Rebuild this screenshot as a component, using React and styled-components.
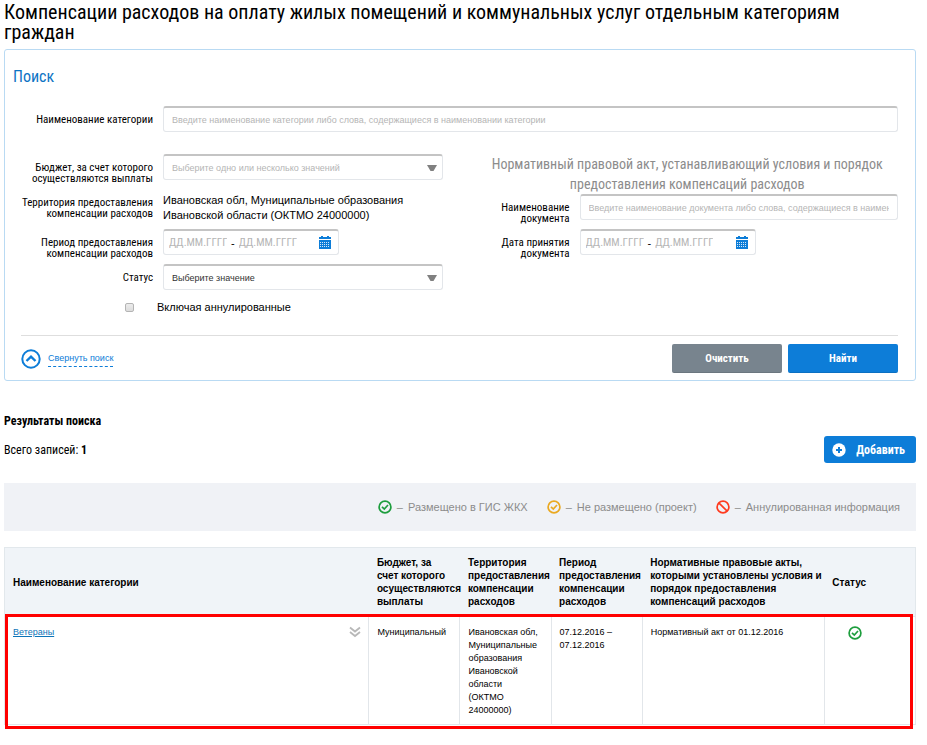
import { useState } from "react";
import styled, { createGlobalStyle } from "styled-components";

const GlobalStyle = createGlobalStyle`
  * {
    box-sizing: border-box;
  }
  body {
    margin: 0;
    background: #fff;
    color: #000;
    font-family: "Liberation Sans", Arial, sans-serif;
    font-size: 11px;
  }
  button, input, select {
    font-family: inherit;
  }
`;

const condensed = `"Roboto Condensed", "Liberation Sans Narrow", "Roboto", sans-serif`;

const App = () => {
  const [canceled, setCanceled] = useState(false);

  return (
    <Page>
      <GlobalStyle />
      <Title>
        Компенсации расходов на оплату жилых помещений и коммунальных услуг отдельным категориям граждан
      </Title>

      <SearchPanel>
        <PanelTitle>Поиск</PanelTitle>
        <Field>
          <Label htmlFor="category">Наименование категории</Label>
          <TextInput
            id="category"
            type="text"
            placeholder="Введите наименование категории либо слова, содержащиеся в наименовании категории"
          />
        </Field>

        <Columns>
          <Column>
            <Field>
              <Label htmlFor="budget">Бюджет, за счет которого осуществляются выплаты</Label>
              <Select id="budget" text="Выберите одно или несколько значений" $muted />
            </Field>
            <Field>
              <Label as="span">Территория предоставления компенсации расходов</Label>
              <Value>Ивановская обл, Муниципальные образования Ивановской области (ОКТМО 24000000)</Value>
            </Field>
            <Field>
              <Label htmlFor="period">Период предоставления компенсации расходов</Label>
              <DateRange id="period" />
            </Field>
            <Field>
              <Label htmlFor="status">Статус</Label>
              <Select id="status" text="Выберите значение" />
            </Field>
            <CheckRow>
              <CheckBox
                id="canceled"
                type="checkbox"
                checked={canceled}
                onChange={(e) => setCanceled(e.target.checked)}
              />
              <label htmlFor="canceled">Включая аннулированные</label>
            </CheckRow>
          </Column>

          <div>
            <ActTitle>Нормативный правовой акт, устанавливающий условия и порядок предоставления компенсаций расходов</ActTitle>
            <Column>
              <Field $narrow>
                <Label htmlFor="document">Наименование документа</Label>
                <TextInput
                  id="document"
                  type="text"
                  placeholder="Введите наименование документа либо слова, содержащиеся в наименовании документа"
                />
              </Field>
              <Field $narrow>
                <Label htmlFor="accepted">Дата принятия документа</Label>
                <DateRange id="accepted" />
              </Field>
            </Column>
          </div>
        </Columns>

        <PanelFooter>
          <Collapse href="#">
            <CollapseIcon />
            <span>Свернуть поиск</span>
          </Collapse>
          <Buttons>
            <Button type="button" $gray>Очистить</Button>
            <Button type="button">Найти</Button>
          </Buttons>
        </PanelFooter>
      </SearchPanel>

      <ResultsTitle>Результаты поиска</ResultsTitle>
      <ResultsBar>
        <span>Всего записей: <b>1</b></span>
        <AddButton type="button">
          <PlusIcon />
          Добавить
        </AddButton>
      </ResultsBar>

      <Legend>
        <LegendItem><CheckIcon color="#1e9e3e" /><span>–</span>Размещено в ГИС ЖКХ</LegendItem>
        <LegendItem><CheckIcon color="#eaa921" /><span>–</span>Не размещено (проект)</LegendItem>
        <LegendItem><BanIcon /><span>–</span>Аннулированная информация</LegendItem>
      </Legend>

      <Table>
        <colgroup>
          <Col $width="40%" />
          <Col $width="10%" />
          <Col $width="10%" />
          <Col $width="10%" />
          <Col $width="20%" />
          <Col $width="10%" />
        </colgroup>
        <thead>
          <tr>
            <th>Наименование категории</th>
            <th>Бюджет, за счет&nbsp;которого осуществляются выплаты</th>
            <th>Территория предоставления компенсации расходов</th>
            <th>Период предоставления компенсации расходов</th>
            <th>Нормативные правовые акты, которыми установлены условия и порядок предоставления компенсаций расходов</th>
            <th>Статус</th>
          </tr>
        </thead>
        <tbody>
          <MarkedRow>
            <td>
              <NameCell>
                <a href="#">Ветераны</a>
                <ExpandIcon />
              </NameCell>
            </td>
            <td>Муниципальный</td>
            <td>
              Ивановская обл, Муниципальные образования Ивановской области
              <br />
              (ОКТМО
              <br />
              24000000)
            </td>
            <td>07.12.2016 – 07.12.2016</td>
            <td>Нормативный акт от 01.12.2016</td>
            <StatusCell><CheckIcon color="#1e9e3e" /></StatusCell>
          </MarkedRow>
        </tbody>
      </Table>
    </Page>
  );
};

export default App;

const Select = ({ id, text, $muted }) => (
  <SelectBox>
    <SelectInput id={id} $muted={$muted}>
      <option>{text}</option>
    </SelectInput>
    <svg width="10" height="6" viewBox="0 0 10 6" aria-hidden="true">
      <path d="M0 0h10L6.500 6h-3z" fill="#808080" />
    </svg>
  </SelectBox>
);

const DateRange = ({ id }) => (
  <DateBox>
    <DateInput id={id} type="text" placeholder="ДД.ММ.ГГГГ" />
    <span>-</span>
    <DateInput type="text" placeholder="ДД.ММ.ГГГГ" aria-label="Дата окончания" />
    <CalendarButton type="button" aria-label="Календарь">
      <svg width="12" height="13" viewBox="0 0 12 13" fill="#0d7dd8">
        <path d="M0 1h2V0h2v1h4V0h2v1h2v2H0z" />
        <path d="M0 4h12v9H0z" />
        <path
          d="M1 6h1v1H1zM3 6h1v1H3zM5 6h1v1H5zM7 6h1v1H7zM9 6h1v1H9zM1 8h1v1H1zM3 8h1v1H3zM5 8h1v1H5zM7 8h1v1H7zM9 8h1v1H9zM1 10h1v1H1zM3 10h1v1H3zM5 10h1v1H5zM7 10h1v1H7zM9 10h1v1H9z"
          fill="#d5e8f8"
        />
      </svg>
    </CalendarButton>
  </DateBox>
);

const CollapseIcon = () => (
  <svg width="20" height="20" viewBox="0 0 20 20" fill="none" stroke="#0d7dd8">
    <circle cx="10" cy="10" r="8.700" strokeWidth="2" />
    <path d="M5.500 12L10 7.700l4.500 4.300" strokeWidth="2.400" />
  </svg>
);

const PlusIcon = () => (
  <svg width="14" height="14" viewBox="0 0 14 14">
    <circle cx="7" cy="7" r="6.700" fill="#fff" />
    <path d="M7 4v6M4 7h6" stroke="#0d7dd8" strokeWidth="2" />
  </svg>
);

const CheckIcon = ({ color }) => (
  <svg width="14" height="14" viewBox="0 0 14 14" fill="none" stroke={color} strokeWidth="1.700">
    <circle cx="7" cy="7" r="5.900" />
    <path d="M4 6.800L6.300 9l3.700-4" />
  </svg>
);

const BanIcon = () => (
  <svg width="14" height="14" viewBox="0 0 14 14" fill="none" stroke="#ff3b1f" strokeWidth="1.700">
    <circle cx="7" cy="7" r="5.900" />
    <path d="M2.800 2.800l8.400 8.400" />
  </svg>
);

const ExpandIcon = () => (
  <svg width="12" height="12" viewBox="0 0 12 12" fill="none" stroke="#b8b8b8" strokeWidth="1.800">
    <path d="M1 1.500L6 5.500l5-4M1 6L6 10l5-4" />
  </svg>
);

const Page = styled.div`
  padding: 2px 11px 15px 4px;
`;
const Title = styled.h1`
  margin: 0 0 7px;
  padding-right: 40px;
  font: 400 20px/20px ${condensed};
`;
const SearchPanel = styled.form`
  border: 1px solid #b9daf3;
  border-radius: 3px;
  padding: 17px 17px 7px 16px;
`;
const PanelTitle = styled.h2`
  margin: 0 0 19px -8px;
  font: 400 16px/20px ${condensed};
  color: #0d74c4;
`;
const Field = styled.div`
  display: grid;
  grid-template-columns: ${(p) => (p.$narrow ? "93px" : "132px")} minmax(0, 1fr);
  column-gap: 10px;
  align-items: start;
`;
const Label = styled.label`
  padding-top: 8px;
  font: 400 11px/11px ${condensed};
  text-align: right;
`;
const boxed = `
  height: 26px;
  border: 1px solid #e3e6ea;
  border-top: 2px solid #c4c4c4;
  border-radius: 3px;
  background: #fff;
`;
const TextInput = styled.input`
  ${boxed}
  width: 100%;
  padding: 0 8px;
  font-size: 9px;
  &::placeholder {
    color: #b5b5b5;
  }
`;
const Columns = styled.div`
  display: grid;
  grid-template-columns: 1fr 1fr;
  gap: 34px;
  margin-top: 22px;
`;
const Column = styled.div`
  display: flex;
  flex-direction: column;
  gap: 5px;
`;
const SelectBox = styled.div`
  position: relative;
  svg {
    position: absolute;
    right: 6px;
    top: 11px;
    pointer-events: none;
  }
`;
const SelectInput = styled.select`
  ${boxed}
  display: block;
  appearance: none;
  width: 100%;
  padding: 0 24px 0 8px;
  font-size: 9px;
  color: ${(p) => (p.$muted ? "#b5b5b5" : "#333")};
`;
const Value = styled.div`
  padding: 4px 0 1px;
  line-height: 15px;
`;
const DateBox = styled.div`
  ${boxed}
  display: flex;
  align-items: center;
  gap: 4px;
  width: 176px;
  padding: 0 7px 0 5px;
`;
const DateInput = styled.input`
  width: 58px;
  border: 0;
  padding: 0;
  background: none;
  font: 400 11px ${condensed};
  &::placeholder {
    color: #b5b5b5;
  }
`;
const CalendarButton = styled.button`
  display: flex;
  margin-left: auto;
  border: 0;
  padding: 0;
  background: none;
`;
const CheckRow = styled.div`
  display: flex;
  align-items: center;
  gap: 23px;
  height: 24px;
  padding-left: 104px;
`;
const CheckBox = styled.input`
  appearance: none;
  width: 9px;
  height: 9px;
  margin: 0;
  border: 1px solid #b4b4b4;
  border-radius: 2px;
  background: linear-gradient(#ececec, #dcdcdc);
  &:checked {
    background: #0d7dd8;
  }
`;
const ActTitle = styled.h3`
  margin: 0;
  font: 400 14px/20px ${condensed};
  text-align: center;
  color: #8c8c8c;
`;
const PanelFooter = styled.div`
  display: flex;
  justify-content: space-between;
  align-items: center;
  margin-top: 16px;
  border-top: 1px solid #dedede;
  padding-top: 8px;
`;
const Collapse = styled.a`
  display: flex;
  align-items: center;
  gap: 7px;
  color: #0d7dd8;
  font-size: 9px;
  text-decoration: none;
  span {
    border-bottom: 1px dashed #0d7dd8;
    line-height: 15px;
  }
`;
const Buttons = styled.div`
  display: flex;
  gap: 6px;
`;
const Button = styled.button`
  width: 110px;
  height: 29px;
  border: 0;
  border-bottom: 1px solid rgba(0, 0, 0, 0.1);
  border-radius: 2px;
  background: ${(p) => (p.$gray ? "#78848e" : "#0d7dd8")};
  color: #fff;
  font: 700 11px ${condensed};
`;
const ResultsTitle = styled.h2`
  margin: 32px 0 7px;
  font: 700 12px/16px ${condensed};
`;
const ResultsBar = styled.div`
  display: flex;
  justify-content: space-between;
  align-items: center;
  font: 400 12px/16px ${condensed};
`;
const AddButton = styled.button`
  display: flex;
  align-items: center;
  gap: 10px;
  height: 27px;
  border: 0;
  border-radius: 3px;
  padding: 0 11px 0 8px;
  background: #0d7dd8;
  color: #fff;
  font: 700 12px ${condensed};
`;
const Legend = styled.div`
  display: flex;
  justify-content: flex-end;
  gap: 19px;
  margin: 20px 0 16px;
  padding: 16px;
  background: #f0f2f6;
  color: #8c8c8c;
  line-height: 16px;
`;
const LegendItem = styled.div`
  display: flex;
  align-items: center;
  gap: 5px;
`;
const Table = styled.table`
  width: 100%;
  table-layout: fixed;
  border-collapse: collapse;
  border: 1px solid #e2e8ec;
  font-size: 9px;
  line-height: 13px;
  text-align: left;
  th {
    padding: 8px 0 8px 8px;
    background: #f0f4f8;
    font-size: 10px;
  }
  td {
    border: 1px solid #e2e6ea;
    padding: 9px 7px 7px 8px;
    vertical-align: top;
  }
  a {
    color: #0d74b8;
  }
`;
const Col = styled.col`
  width: ${(p) => p.$width};
`;
const MarkedRow = styled.tr`
  position: relative;
  &::after {
    content: "";
    position: absolute;
    inset: -3px 3px -4px 0;
    border: 3px solid #f00;
    pointer-events: none;
  }
`;
const NameCell = styled.div`
  display: flex;
  justify-content: space-between;
`;
const StatusCell = styled.td`
  && {
    padding-left: 23px;
  }
`;
